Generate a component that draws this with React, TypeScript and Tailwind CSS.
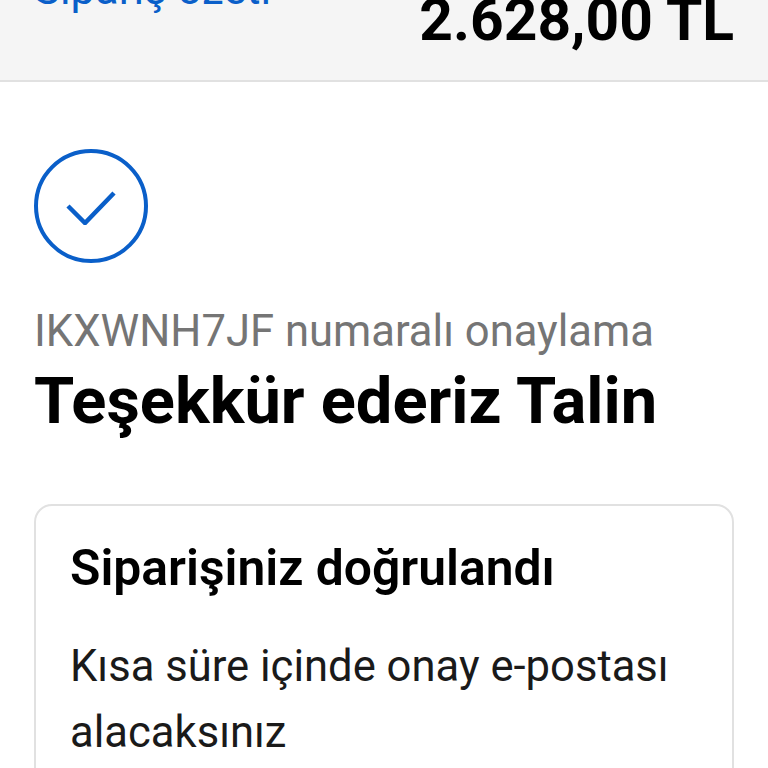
export default function App() {
  return (
    <div className="w-[768px] h-[768px] overflow-hidden bg-white font-['Roboto',sans-serif]">
      <div className="h-[82px] bg-[#f5f5f5] border-b-2 border-[#e1e1e1] pl-[34px] pr-[34px] flex justify-between items-end overflow-hidden">
        <span className="text-[#0a5fc9] text-[43.6px] leading-[52px] mb-[64px]">Sipariş özeti</span>
        <span className="text-black text-[58.7px] leading-[66px] font-bold mb-[27px]">2.628,00 TL</span>
      </div>
      <div className="px-[34px] pt-[67px]">
        <div className="w-[114px] h-[114px] rounded-full border-[4px] border-[#0a5fc9] flex items-center justify-center">
          <svg width="52" height="38" viewBox="0 0 52 38" fill="none" stroke="#0a5fc9" strokeWidth="4.5">
            <path d="M3 19 L20 36 L49 6" />
          </svg>
        </div>
        <p className="mt-[42px] text-[#757575] text-[43.6px] leading-[54px]">IKXWNH7JF numaralı onaylama</p>
        <h1 className="mt-[6px] text-black text-[65px] leading-[72px] font-bold">Teşekkür ederiz Talin</h1>
        <div className="mt-[67px] border-2 border-[#e1e1e1] rounded-[18px] pl-[34px] pr-[30px] pt-[32px] pb-[20px]">
          <h2 className="text-black text-[49.8px] leading-[60px] font-semibold">Siparişiniz doğrulandı</h2>
          <p className="mt-[36px] text-[#1a1a1a] text-[43.6px] leading-[66px]">Kısa süre içinde onay e-postası alacaksınız</p>
        </div>
      </div>
    </div>
  );
}
